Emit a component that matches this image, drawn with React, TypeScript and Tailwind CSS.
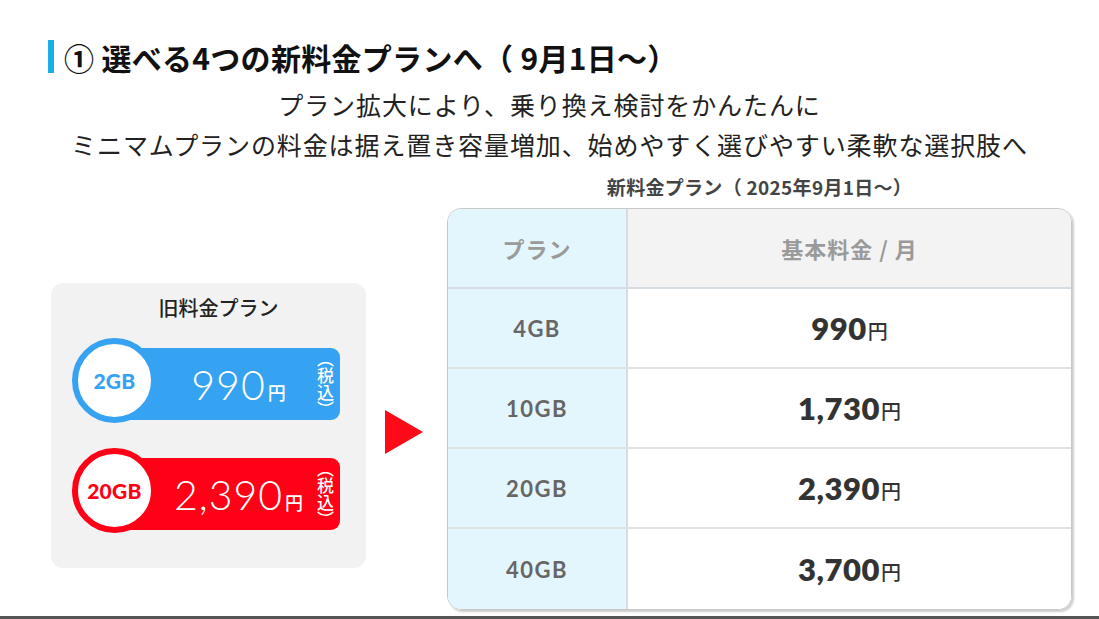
import React from 'react';

const jp = "font-['Noto_Sans_CJK_JP','Noto_Sans',sans-serif]";
const num = "font-['Lato','Noto_Sans_CJK_JP',sans-serif]";

const oldPlans = [
  { gb: '2GB', price: '990', color: 'bg-[#36a2f2]', ring: 'border-[#36a2f2]', text: 'text-[#36a2f2]' },
  { gb: '20GB', price: '2,390', color: 'bg-[#ff0016]', ring: 'border-[#ff0016]', text: 'text-[#ff0016]' },
];

const newPlans = [
  { gb: '4GB', price: '990' },
  { gb: '10GB', price: '1,730' },
  { gb: '20GB', price: '2,390' },
  { gb: '40GB', price: '3,700' },
];

function OldPlanPill({ plan }: { plan: (typeof oldPlans)[number] }) {
  return (
    <div className="relative h-[85px] w-[268px]">
      <div className={`absolute left-[28px] top-[10px] flex h-[72px] w-[240px] items-center rounded-[9px] ${plan.color} pl-[60px] pr-[6px]`}>
        <div className="flex flex-1 items-baseline justify-center text-white">
          <span className={`${num} text-[41px] font-light leading-none tracking-[1px]`}>{plan.price}</span>
          <span className={`${jp} ml-[2px] text-[18px] font-medium leading-none`}>円</span>
        </div>
        <span className={`${jp} text-[17px] font-medium leading-[17px] text-white [writing-mode:vertical-rl]`}>（税込）</span>
      </div>
      <div className={`absolute left-0 top-0 flex h-[85px] w-[85px] items-center justify-center rounded-full border-[6px] ${plan.ring} bg-white`}>
        <span className={`${num} text-[21px] font-black tracking-[0.3px] ${plan.text}`}>{plan.gb}</span>
      </div>
    </div>
  );
}

export default function App() {
  return (
    <div className={`flex h-[619px] w-[1099px] flex-col overflow-hidden bg-white ${jp} text-[#222]`}>
      <div className="ml-[48px] mt-[40px] flex h-[33px] items-center gap-[10px]">
        <div className="h-[33px] w-[6px] bg-[#1aaee8]" />
        <h1 className="text-[30px] font-bold leading-none tracking-[0.3px] text-[#111]">① 選べる4つの新料金プランへ（ 9月1日～）</h1>
      </div>

      <div className="mt-[11px] text-center text-[25px] leading-[40px] tracking-[0.9px]">
        <p>プラン拡大により、乗り換え検討をかんたんに</p>
        <p>ミニマムプランの料金は据え置き容量増加、始めやすく選びやすい柔軟な選択肢へ</p>
      </div>

      <div className="flex items-start">
        <div className="ml-[51px] mt-[119px] flex h-[285px] w-[315px] flex-col items-center rounded-[12px] bg-[#f2f2f2]">
          <p className="mt-[12px] pl-[20px] text-[20px] font-medium leading-[26px]">旧料金プラン</p>
          <div className="mt-[17px] flex w-full flex-col gap-[25px] pl-[21px]">
            {oldPlans.map((p) => (
              <OldPlanPill key={p.gb} plan={p} />
            ))}
          </div>
        </div>

        <div className="ml-[19px] mt-[246px] h-0 w-0 border-y-[22px] border-l-[38px] border-y-transparent border-l-[#ff0a16]" />

        <div className="ml-[24px] flex w-[625px] flex-col items-center">
          <p className="mt-[12px] text-[19px] font-bold leading-[22px] tracking-[0.3px] text-[#444]">新料金プラン（ 2025年9月1日～）</p>
          <div className="mt-[10px] w-full overflow-hidden rounded-[14px] border border-[#c8c8c8] shadow-[2px_2px_2px_rgba(0,0,0,0.2)]">
            <div className="flex h-[80px] border-b-2 border-[#d6dde2]">
              <div className="flex w-[180px] items-center justify-center border-r-2 border-[#d6dde2] bg-[#e4f6fd] text-[22px] font-bold tracking-[1px] text-[#9a9a9a]">プラン</div>
              <div className="flex flex-1 items-center justify-center bg-[#f3f3f3] text-[22px] font-bold tracking-[1px] text-[#9a9a9a]">基本料金 / 月</div>
            </div>
            {newPlans.map((p, i) => (
              <div key={p.gb} className={`flex h-[80px] ${i < newPlans.length - 1 ? 'border-b-2 border-[#dfe3e6]' : ''}`}>
                <div className={`${num} flex w-[180px] items-center justify-center border-r-2 border-[#d6dde2] bg-[#e4f6fd] text-[22px] font-bold tracking-[1.5px] text-[#666]`}>{p.gb}</div>
                <div className="flex flex-1 items-center justify-center bg-white text-[#333]">
                  <span className={`${num} text-[31px] font-extrabold leading-none tracking-[0.5px]`}>{p.price}</span>
                  <span className="ml-[1px] mt-[6px] text-[20px] font-medium leading-none">円</span>
                </div>
              </div>
            ))}
          </div>
        </div>
      </div>

      <div className="mt-auto h-[3px] w-full shrink-0 bg-[#555]" />
    </div>
  );
}
